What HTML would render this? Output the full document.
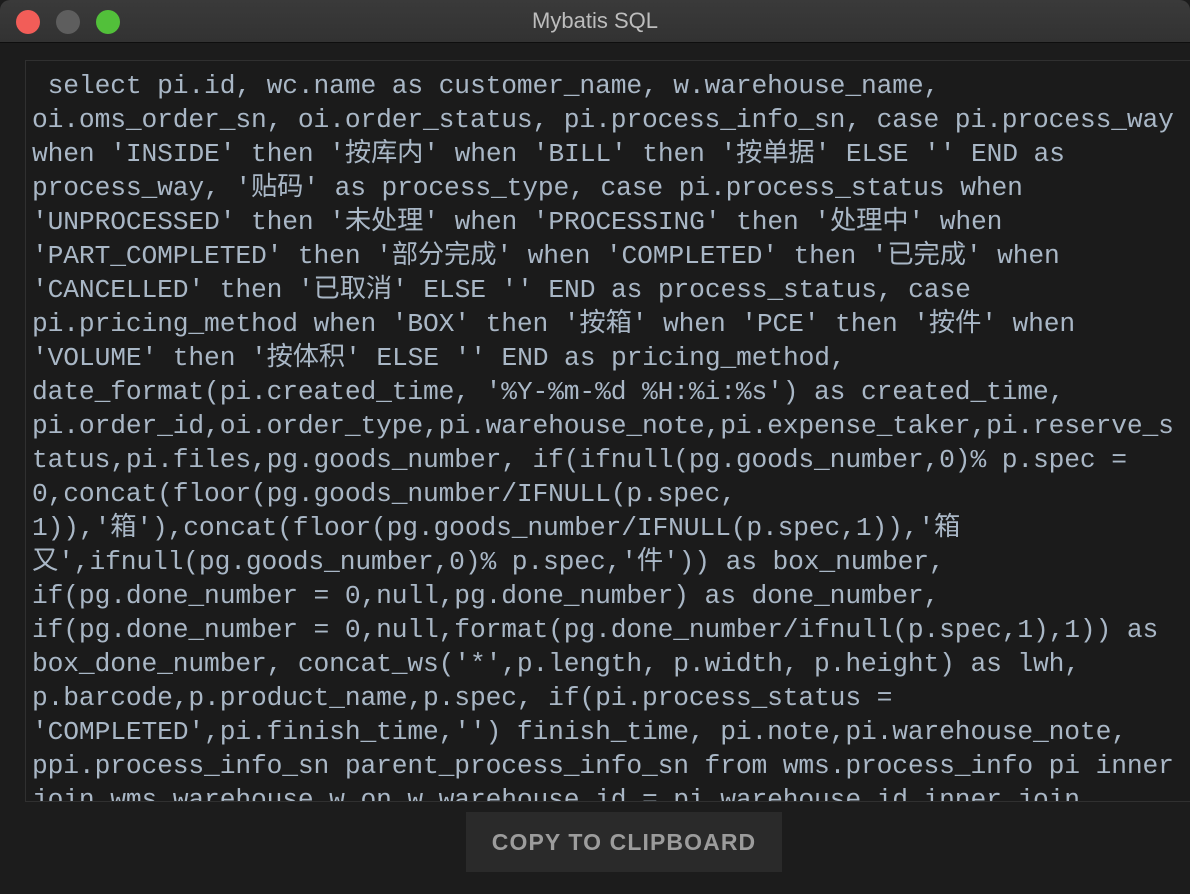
<!DOCTYPE html>
<html><head><meta charset="utf-8"><style>
html,body{margin:0;padding:0;width:1190px;height:894px;overflow:hidden;background:#1c1c1c;}
.title{position:absolute;left:0;top:0;width:1190px;height:42px;background:linear-gradient(#3a3a3a,#323232);border-bottom:1px solid #0e0e0e;border-radius:10px 10px 0 0;}
.dot{position:absolute;top:10px;width:24px;height:24px;border-radius:50%;}
.t{position:absolute;left:0;width:1190px;top:8px;text-align:center;color:#bdbdbd;font:22px "Liberation Sans",sans-serif;}
.box{position:absolute;left:25px;top:60px;width:1170px;height:740px;border:1px solid #303030;border-right:none;background:#1b1b1b;overflow:hidden;}
pre{margin:0;position:absolute;left:6px;top:8px;font:26.3px/34px "Liberation Mono","Noto Sans CJK SC",monospace;letter-spacing:-0.14px;color:#a9b7c6;white-space:pre;}
.btn{position:absolute;left:466px;top:812px;width:316px;height:60px;background:#2a2a2a;color:#9c9c9c;font:bold 23px/60px "Liberation Sans",sans-serif;text-align:center;letter-spacing:1.1px;}
</style></head><body>
<div class="title">
<div class="dot" style="left:16px;background:#f25d58"></div>
<div class="dot" style="left:56px;background:#5e5e5e"></div>
<div class="dot" style="left:96px;background:#52c03a"></div>
<div class="t">Mybatis SQL</div>
</div>
<div class="box"><pre> select pi.id, wc.name as customer_name, w.warehouse_name,
oi.oms_order_sn, oi.order_status, pi.process_info_sn, case pi.process_way
when 'INSIDE' then '按库内' when 'BILL' then '按单据' ELSE '' END as
process_way, '贴码' as process_type, case pi.process_status when
'UNPROCESSED' then '未处理' when 'PROCESSING' then '处理中' when
'PART_COMPLETED' then '部分完成' when 'COMPLETED' then '已完成' when
'CANCELLED' then '已取消' ELSE '' END as process_status, case
pi.pricing_method when 'BOX' then '按箱' when 'PCE' then '按件' when
'VOLUME' then '按体积' ELSE '' END as pricing_method,
date_format(pi.created_time, '%Y-%m-%d %H:%i:%s') as created_time,
pi.order_id,oi.order_type,pi.warehouse_note,pi.expense_taker,pi.reserve_s
tatus,pi.files,pg.goods_number, if(ifnull(pg.goods_number,0)% p.spec =
0,concat(floor(pg.goods_number/IFNULL(p.spec,
1)),'箱'),concat(floor(pg.goods_number/IFNULL(p.spec,1)),'箱
又',ifnull(pg.goods_number,0)% p.spec,'件')) as box_number,
if(pg.done_number = 0,null,pg.done_number) as done_number,
if(pg.done_number = 0,null,format(pg.done_number/ifnull(p.spec,1),1)) as
box_done_number, concat_ws('*',p.length, p.width, p.height) as lwh,
p.barcode,p.product_name,p.spec, if(pi.process_status =
'COMPLETED',pi.finish_time,'') finish_time, pi.note,pi.warehouse_note,
ppi.process_info_sn parent_process_info_sn from wms.process_info pi inner
join wms.warehouse w on w.warehouse_id = pi.warehouse_id inner join</pre></div>
<div class="btn">COPY TO CLIPBOARD</div>
</body></html>
